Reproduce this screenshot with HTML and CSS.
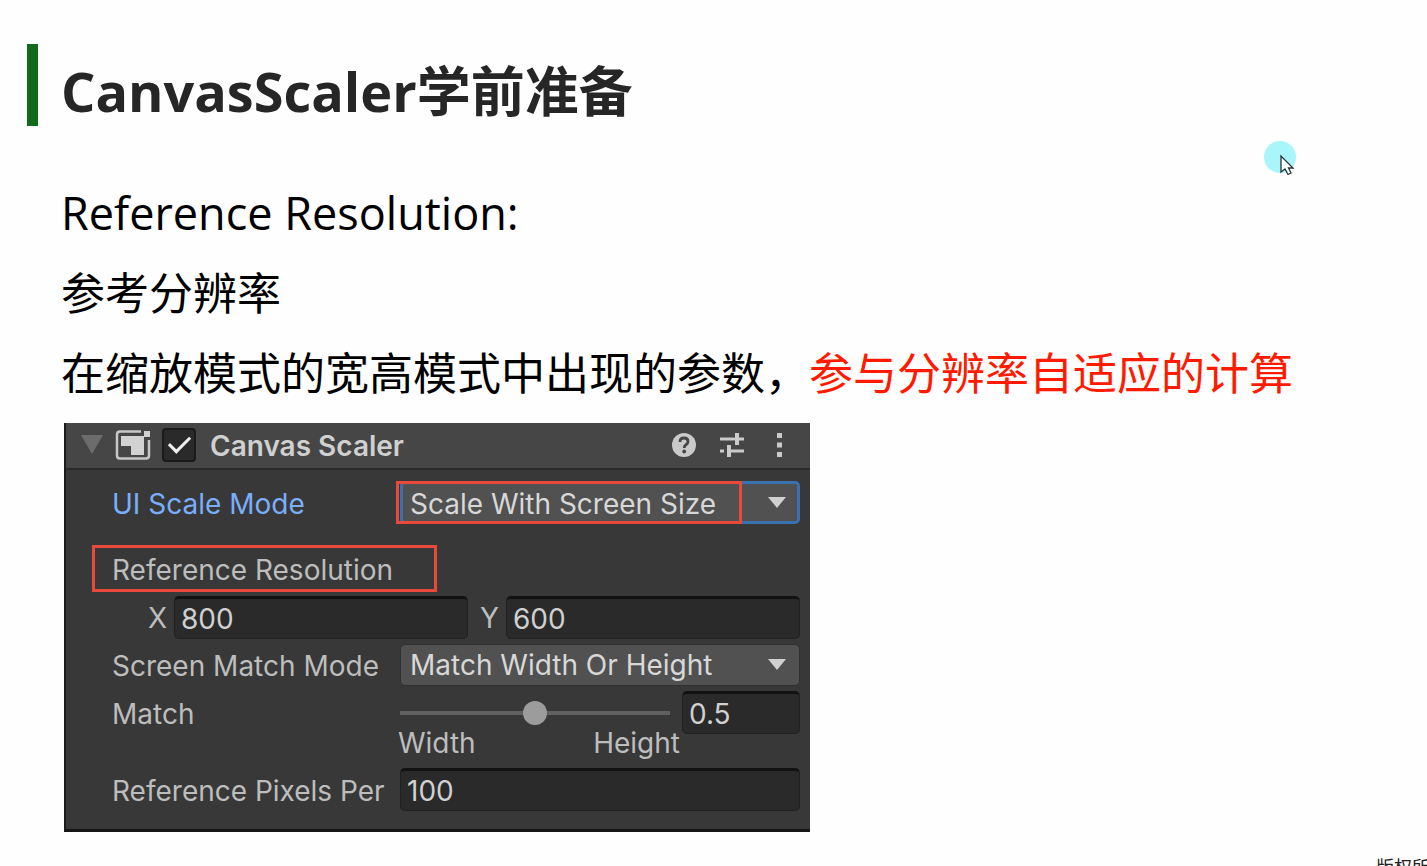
FILE: index.html
```html
<!DOCTYPE html>
<html lang="zh-CN">
<head>
<meta charset="utf-8">
<title>CanvasScaler学前准备</title>
<link rel="stylesheet" href="styles.css">
</head>
<body>
<main class="slide">
  <header class="slide-header">
    <span class="accent"></span>
    <h1 class="title">CanvasScaler学前准备</h1>
  </header>
  <section class="copy">
    <p class="line latin">Reference Resolution:</p>
    <p class="line">参考分辨率</p>
    <p class="line">在缩放模式的宽高模式中出现的参数，<span class="highlight">参与分辨率自适应的计算</span></p>
  </section>

  <form class="inspector">
    <div class="component-bar">
      <svg class="foldout" viewBox="0 0 22 19" aria-hidden="true"><path d="M0 0H22L11 19Z"/></svg>
      <svg class="component-icon" viewBox="0 0 36 32" aria-hidden="true">
        <path d="M26 2.500H5Q2 2.500 2 5.500V26.500Q2 29.500 5 29.500H31Q34 29.500 34 26.500V11" fill="none" stroke="#c8c8c8" stroke-width="2.500"/>
        <path d="M6 7H29V26H16V17H6Z" fill="#d2d2d2"/>
        <path d="M29 2H35V8H29Z" fill="#d2d2d2"/>
      </svg>
      <input class="enable" type="checkbox" id="enabled" checked>
      <label class="component-name" for="enabled">Canvas Scaler</label>
      <button class="tool" type="button" aria-label="Help">
        <svg viewBox="0 0 26 26" aria-hidden="true"><circle cx="13" cy="13" r="12" fill="#cacaca"/><path d="M9 10Q9 6 13 6Q17 6 17 9.500Q17 11.500 15 12.700Q13.200 13.800 13.200 16" fill="none" stroke="#464646" stroke-width="2.800"/><circle cx="13.200" cy="19.500" r="1.900" fill="#464646"/></svg>
      </button>
      <button class="tool" type="button" aria-label="Presets">
        <svg viewBox="0 0 26 26" aria-hidden="true"><path d="M1 7H14M18 7H25M1 19H5M10 19H25" fill="none" stroke="#cacaca" stroke-width="2.800"/><path d="M18 1V13M10 13V25" stroke="#cacaca" stroke-width="4"/><path d="M14 7H18" stroke="#cacaca" stroke-width="2.800"/></svg>
      </button>
      <button class="tool" type="button" aria-label="More">
        <svg viewBox="0 0 26 26" aria-hidden="true"><path d="M10 1H15V6H10ZM10 10.500H15V15.500H10ZM10 20H15V25H10Z" fill="#cacaca"/></svg>
      </button>
    </div>

    <div class="fields">
      <div class="row row-mode">
        <label class="active" for="mode">UI Scale Mode</label>
        <div class="dropdown focused">
          <select id="mode"><option>Scale With Screen Size</option><option>Constant Pixel Size</option></select>
          <svg class="arrow" viewBox="0 0 18 11" aria-hidden="true"><path d="M0 0H18L9 11Z"/></svg>
          <span class="mark mark-mode"></span>
        </div>
      </div>
      <div class="row-heading"><span class="heading">Reference Resolution<span class="mark mark-heading"></span></span></div>
      <div class="vector">
        <label for="x">X</label><input class="field" id="x" value="800">
        <label for="y">Y</label><input class="field" id="y" value="600">
      </div>
      <div class="row row-match-mode">
        <label for="match-mode">Screen Match Mode</label>
        <div class="dropdown">
          <select id="match-mode"><option>Match Width Or Height</option><option>Expand</option></select>
          <svg class="arrow" viewBox="0 0 18 11" aria-hidden="true"><path d="M0 0H18L9 11Z"/></svg>
        </div>
      </div>
      <div class="row">
        <label for="match">Match</label>
        <div class="match">
          <input class="slider" id="match" type="range" min="0" max="1" step="0.01" value="0.5">
          <input class="field" value="0.5" aria-label="Match value">
        </div>
      </div>
      <div class="row"><div class="ends"><span>Width</span><span>Height</span></div></div>
      <div class="row row-pixels">
        <label for="ppu">Reference Pixels Per</label>
        <input class="field" id="ppu" value="100">
      </div>
    </div>
  </form>

  <svg class="pointer" viewBox="0 0 34 36" aria-hidden="true">
    <circle cx="16" cy="16" r="16" fill="#a9f6fa"/>
    <path d="M17 15V31L21 28L24 33.500L27 32L24.500 27H29Z" fill="#fff" stroke="#26333a" stroke-width="1.300"/>
  </svg>
  <small class="copyright">版权所</small>
</main>
</body>
</html>
```
FILE: styles.css
```css
* { box-sizing: border-box; }
body {
  margin: 0;
  background: #fefefe;
  color: #000;
  font-family: "Open Sans", "Noto Sans CJK SC", sans-serif;
}
.slide {
  position: relative;
  min-height: 100vh;
  padding: 44px 27px 34px;
  overflow: hidden;
}
.slide-header { display: flex; gap: 23px; height: 82px; }
.accent { width: 11px; background: #136a1c; }
.title {
  margin: 0;
  color: #262626;
  font-size: 54px;
  line-height: 94px;
}
.copy { padding: 47px 0 0 34px; }
.line { margin: 0; font-size: 44px; line-height: 80px; }
.latin { font-size: 45px; }
.highlight { color: #ff1a00; }

.inspector {
  max-width: 746px;
  margin: 10px 0 0 37px;
  border-left: 2px solid #1c1c1c;
  border-bottom: 3px solid #161616;
  background: #383838;
  color: #bdbdbd;
  font-family: Inter, sans-serif;
  font-size: 28px;
  line-height: 40px;
}
.component-bar {
  display: flex;
  align-items: center;
  height: 47px;
  padding: 0 17px 2px 15px;
  border-bottom: 2px solid #2b2b2b;
  background: #464646;
}
.foldout { width: 22px; height: 19px; fill: #6c6c6c; }
.component-icon { width: 36px; height: 32px; margin-left: 12px; }
.enable {
  appearance: none;
  width: 34px;
  height: 34px;
  margin: 0 0 0 11px;
  border: 2px solid #1b1b1b;
  border-radius: 4px;
  background: #2a2a2a;
  display: grid;
  place-items: center;
}
.enable:checked::before {
  content: "";
  width: 18px;
  height: 9px;
  border: solid #eee;
  border-width: 0 0 3px 3px;
  transform: translateY(-3px) rotate(-45deg);
}
.component-name { flex: 1; padding-top: 3px; margin-left: 14px; color: #d0d0d0; font-weight: 600; }
.tool { padding: 0; margin-left: 22px; border: 0; background: none; height: 26px; }
.tool svg { display: block; width: 26px; height: 26px; }

.fields { padding: 11px 10px 18px 46px; }
.row { display: grid; grid-template-columns: 288px 1fr; align-items: center; }
.row > :last-child { grid-column: 2; }
.row > label { padding-top: 2px; }
.active { color: #7baefa; }
.dropdown {
  position: relative;
  border: 1px solid #303030;
  border-radius: 5px;
  background: #515151;
}
.focused { border: 3px solid #3a72b0; }
select {
  appearance: none;
  display: block;
  width: 100%;
  height: 40px;
  padding: 0 40px 2px 9px;
  border: 0;
  background: none;
  color: #d8d8d8;
  font: inherit;
}
.focused select { height: 37px; padding: 0 40px 4px 7px; }
.arrow { position: absolute; right: 13px; top: 14px; width: 18px; height: 11px; fill: #d0d0d0; pointer-events: none; }
.focused .arrow { right: 11px; top: 13px; }
.mark { position: absolute; border: 3px solid #e8493a; pointer-events: none; }
.mark-mode { inset: -3px 55px -3px -7px; }
.row-heading { margin: 21px 0 4px; }
.heading { position: relative; display: inline-block; padding-top: 3px; line-height: 44px; }
.mark-heading { inset: 0 -44px 0 -20px; }
.vector { display: grid; grid-template-columns: 26px 1fr 38px 1fr; align-items: center; margin-left: 36px; }
.vector label:nth-of-type(2) { padding-left: 12px; }
.field {
  width: 100%;
  min-width: 0;
  height: 43px;
  padding: 0 6px;
  border: 1px solid #202020;
  border-top: 3px solid #121212;
  border-radius: 5px;
  background: #2a2a2a;
  color: #d0d0d0;
  font: inherit;
}
.row-match-mode { margin: 5px 0; }
.match { display: grid; grid-template-columns: 1fr 118px; gap: 12px; align-items: center; }
.slider { appearance: none; width: 100%; height: 24px; margin: 0; background: none; }
.slider::-webkit-slider-runnable-track { height: 4px; background: #606060; }
.slider::-webkit-slider-thumb { appearance: none; width: 24px; height: 24px; margin-top: -10px; border-radius: 50%; background: #9c9c9c; }
.ends { display: flex; justify-content: space-between; margin: -1px 120px 0 -2px; line-height: 20px; }
.row-pixels { margin-top: 15px; }

.pointer { position: absolute; right: 129px; top: 141px; width: 34px; height: 36px; }
.copyright { position: absolute; right: -3px; bottom: -12px; color: #222; font-size: 18px; line-height: 22px; }
```
